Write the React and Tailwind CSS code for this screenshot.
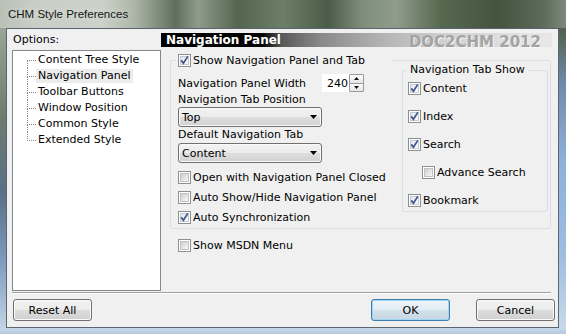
import React from "react";

const TREE = ["Content Tree Style", "Navigation Panel", "Toolbar Buttons", "Window Position", "Common Style", "Extended Style"];

function Check({ on }) {
  return (
    <span className="w-[13px] h-[13px] shrink-0 flex border border-[#8e8f8f] bg-white p-[1px]">
      <span className={"flex-1 flex items-center justify-center border " + (on ? "border-[#c3cad4] bg-[linear-gradient(135deg,#e3e7ee,#fafbfc)]" : "border-[#c2c2c2] bg-[linear-gradient(135deg,#cdcdcd,#f8f8f8)]")}>
        {on && (
          <svg width="7" height="7" viewBox="0 0 7 7" className="overflow-visible">
            <path d="M0.2 3.4 L2.4 6.2 L6.8 -0.6" fill="none" stroke="#40568a" strokeWidth="1.7" />
          </svg>
        )}
      </span>
    </span>
  );
}

function CheckRow({ on, label, className = "" }) {
  return (
    <div className={"flex items-center gap-[2px] " + className}>
      <Check on={on} />
      <span className="leading-[13px] whitespace-nowrap">{label}</span>
    </div>
  );
}

function Combo({ value }) {
  return (
    <div className="w-[144px] h-[20px] rounded-[3px] border border-[#707070] bg-[linear-gradient(180deg,#f3f3f3_0%,#ebebeb_50%,#dedede_51%,#d2d2d2_100%)] shadow-[inset_0_0_0_1px_#fafafa] flex items-center pl-[3px] pr-[4px]">
      <span className="flex-1 leading-[13px]">{value}</span>
      <svg width="7" height="4" viewBox="0 0 7 4">
        <path d="M0 0H7L3.5 4Z" fill="#000" />
      </svg>
    </div>
  );
}

function Btn({ children, primary }) {
  return (
    <div className={"w-[79px] h-[22px] rounded-[3px] border flex items-center justify-center leading-[13px] " + (primary
      ? "border-[#3c7fb1] bg-[linear-gradient(180deg,#edf4f9_0%,#e2ecf4_50%,#d3e0ea_51%,#c8d7e3_100%)] shadow-[inset_0_0_0_1px_#9fd6f2]"
      : "border-[#707070] bg-[linear-gradient(180deg,#f2f2f2_0%,#ebebeb_50%,#dddddd_51%,#cfcfcf_100%)] shadow-[inset_0_0_0_1px_#fbfbfb]")}>
      {children}
    </div>
  );
}

export default function App() {
  return (
    <div className="w-[566px] h-[334px] flex flex-col overflow-hidden font-['DejaVu_Sans',sans-serif] text-[11px] text-black bg-[#7d8a7b]">
      {/* title bar (aero glass) */}
      <div className="h-[28px] shrink-0 flex items-center pt-[2px] pl-[8px] bg-[linear-gradient(90deg,#b9c0b6_0%,#c8cec5_6%,#ccd2c9_18%,#aab4a6_24%,#5f6f5d_31%,#8e9b8a_35%,#55664f_42%,#6c7d68_50%,#4b5c48_58%,#7f8e7b_64%,#8f9c8b_70%,#56674f_78%,#44543f_88%,#5c6b5a_96%,#7c8a7a_100%)]">
        <span className="font-['Liberation_Sans',sans-serif] text-[11.5px] text-[#141414] [text-shadow:0_0_6px_#e4e8e2]">CHM Style Preferences</span>
      </div>

      <div className="flex-1 flex min-h-0">
        <div className="w-[6px] shrink-0 bg-[linear-gradient(180deg,#9aa597_0%,#6d7c6c_30%,#5a6f86_55%,#7e9cbf_78%,#c3d3e4_100%)]" />

        {/* client */}
        <div className="w-[553px] border border-[#5b6670] bg-[#f0f0f0] flex flex-col">
          <div className="h-[263px] pt-[4px] pl-[5px] flex">
            {/* options tree */}
            <div className="w-[149px] flex flex-col">
              <div className="leading-[14px] pl-[1px]">Options:</div>
              <div className="mt-[3px] h-[241px] border border-[#828790] bg-white pl-[14px] pt-[1px] flex flex-col">
                {TREE.map((t, i) => (
                  <div key={t} className="flex h-[16px]">
                    <div className="w-[9px] shrink-0 flex flex-col">
                      <div className={"h-[9px] border-b border-dotted border-[#8a8a8a] " + (i > 0 ? "border-l" : "")} />
                      <div className={"h-[7px] border-dotted border-[#8a8a8a] " + (i < TREE.length - 1 ? "border-l" : "")} />
                    </div>
                    <span className={"self-center h-[14px] leading-[14px] px-[2px] whitespace-nowrap " + (i === 1 ? "bg-[#ececec]" : "")}>{t}</span>
                  </div>
                ))}
              </div>
            </div>

            {/* right panel */}
            <div className="w-[391px] flex flex-col">
              <div className="h-[14px] flex items-center justify-between pl-[5px] pr-[11px] bg-[linear-gradient(90deg,#000_0%,#050505_26%,#5a5a5a_31%,#8a8a8a_41%,#b2b2b2_56%,#d3d3d3_74%,#e8e8e8_100%)]">
                <span className="text-white font-bold text-[12px] leading-[14px]">Navigation Panel</span>
                <span className="font-bold text-[15px] leading-[14px] text-[#a4a4a4] translate-y-[2px] [text-shadow:1px_1px_0_#f6f6f6]">DOC2CHM 2012</span>
              </div>

              <fieldset className="mt-[6px] ml-[9px] w-[381px] border border-[#d5dfe5] rounded-[3px] pl-[7px] pr-[2px] pb-[1px]">
                <legend className="-ml-[2px] pl-[2px] w-[216px] h-[14px] flex items-center">
                  <CheckRow on label="Show Navigation Panel and Tab" />
                </legend>
                <div className="flex items-start">
                  <div className="w-[224px] flex flex-col">
                    <div className="mt-[7px] h-[18px] flex items-center">
                      <span className="w-[144px] leading-[13px]">Navigation Panel Width</span>
                      <div className="flex h-[18px]">
                        <div className="w-[27px] bg-white flex items-center pl-[5px] leading-[13px]">240</div>
                        <div className="w-[15px] flex flex-col border border-[#9a9a9a] rounded-[1px]">
                          <div className="flex-1 flex items-center justify-center border-b border-[#9a9a9a] bg-[linear-gradient(180deg,#fdfdfd,#e6e6e6)]">
                            <svg width="5" height="3" viewBox="0 0 5 3"><path d="M0 3H5L2.5 0Z" fill="#111" /></svg>
                          </div>
                          <div className="flex-1 flex items-center justify-center bg-[linear-gradient(180deg,#fdfdfd,#e6e6e6)]">
                            <svg width="5" height="3" viewBox="0 0 5 3"><path d="M0 0H5L2.5 3Z" fill="#111" /></svg>
                          </div>
                        </div>
                      </div>
                    </div>
                    <div className="h-[15px] leading-[15px]">Navigation Tab Position</div>
                    <Combo value="Top" />
                    <div className="h-[16px] leading-[16px]">Default Navigation Tab</div>
                    <Combo value="Content" />
                    <CheckRow className="mt-[4px] h-[20px]" label="Open with Navigation Panel Closed" />
                    <CheckRow className="h-[20px]" label="Auto Show/Hide Navigation Panel" />
                    <CheckRow className="h-[20px]" on label="Auto Synchronization" />
                  </div>

                  <fieldset className="-mt-[4px] w-[146px] border border-[#d5dfe5] rounded-[3px] px-[5px]">
                    <legend className="-ml-[1px] px-[3px] h-[14px] leading-[14px]">Navigation Tab Show</legend>
                    <div className="flex flex-col gap-[6px]">
                      <CheckRow className="h-[22px]" on label="Content" />
                      <CheckRow className="h-[22px]" on label="Index" />
                      <CheckRow className="h-[22px]" on label="Search" />
                      <CheckRow className="h-[22px] pl-[14px]" label="Advance Search" />
                      <CheckRow className="h-[22px]" on label="Bookmark" />
                    </div>
                  </fieldset>
                </div>
              </fieldset>

              <CheckRow className="mt-[7px] ml-[17px] h-[18px]" label="Show MSDN Menu" />
            </div>
          </div>

          <div className="ml-[5px] w-[539px] h-[2px] border-t border-b border-t-[#a0a0a0] border-b-white" />

          <div className="mt-[5px] pl-[6px] pr-[3px] flex items-center">
            <Btn>Reset All</Btn>
            <div className="ml-auto flex gap-[26px]">
              <Btn primary>OK</Btn>
              <Btn>Cancel</Btn>
            </div>
          </div>
        </div>

        <div className="w-[7px] shrink-0 bg-[linear-gradient(180deg,#52604f_0%,#6f8aa8_18%,#8fb1d8_45%,#9dbde0_75%,#c9d9ea_100%)]" />
      </div>
      <div className="h-[6px] shrink-0 bg-[linear-gradient(180deg,#c9d8e8,#b6c9dd)]" />
    </div>
  );
}
